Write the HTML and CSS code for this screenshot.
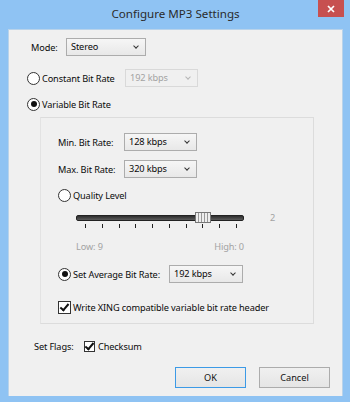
FILE: index.html
```html
<!DOCTYPE html>
<html lang="en">
<head>
  <meta charset="UTF-8">
  <title>Configure MP3 Settings</title>
  <link rel="stylesheet" href="styles.css">
</head>
<body>

  <div class="window">
    <div class="titlebar">
      <span class="title">Configure MP3 Settings</span>
      <span class="close-btn">
        <svg width="8" height="8" viewBox="0 0 8 8"><path d="M1 1 L7 7 M7 1 L1 7" stroke="#fff" stroke-width="1.7"/></svg>
      </span>
    </div>

    <div class="client">
      <div class="row mode-row">
        <span class="label mode-label">Mode:</span>
        <div class="combo mode-combo">Stereo<span class="arrow"></span></div>
      </div>

      <div class="row cbr-row">
        <span class="radio"></span>
        <span class="label cbr-label">Constant Bit Rate</span>
        <div class="combo disabled cbr-combo">192 kbps<span class="arrow"></span></div>
      </div>

      <div class="row vbr-row">
        <span class="radio checked"></span>
        <span class="label">Variable Bit Rate</span>
      </div>

      <!-- VBR options group -->
      <div class="group">
        <div class="row min-row">
          <span class="label rate-label">Min. Bit Rate:</span>
          <div class="combo rate-combo">128 kbps<span class="arrow"></span></div>
        </div>
        <div class="row max-row">
          <span class="label rate-label">Max. Bit Rate:</span>
          <div class="combo rate-combo">320 kbps<span class="arrow"></span></div>
        </div>
        <div class="row quality-row">
          <span class="radio"></span>
          <span class="label">Quality Level</span>
        </div>
        <div class="slider-row">
          <div class="slider">
            <div class="track"></div>
            <div class="thumb"></div>
            <div class="ticks">
              <span></span><span></span><span></span><span></span><span></span>
              <span></span><span></span><span></span><span></span><span></span>
            </div>
          </div>
          <span class="slider-value">2</span>
        </div>
        <div class="range-row">
          <span>Low: 9</span>
          <span>High: 0</span>
        </div>
        <div class="row avg-row">
          <span class="radio checked"></span>
          <span class="label avg-label">Set Average Bit Rate:</span>
          <div class="combo avg-combo">192 kbps<span class="arrow"></span></div>
        </div>
        <div class="row xing-row">
          <span class="checkbox checked"></span>
          <span class="label">Write XING compatible variable bit rate header</span>
        </div>
      </div>

      <div class="row flags-row">
        <span class="label flags-label">Set Flags:</span>
        <span class="checkbox small checked"></span>
        <span class="label">Checksum</span>
      </div>

      <div class="buttons">
        <button class="btn default">OK</button>
        <button class="btn">Cancel</button>
      </div>
    </div>
  </div>

</body>
</html>
```

FILE: styles.css
```css
body {
  margin: 0;
  font-family: "Noto Sans", "Open Sans", sans-serif;
  font-size: 9.2px;
  letter-spacing: -0.12px;
  color: #0a0a0a;
}

.window {
  width: 350px;
  height: 402px;
  background-color: #8fc3f3;
  box-sizing: border-box;
  padding: 0 7px 6px 8px;
  display: flex;
  flex-direction: column;
}

.titlebar {
  height: 29px;
  position: relative;
  display: flex;
  justify-content: center;
  align-items: center;
}

.title {
  font-size: 11.6px;
  letter-spacing: 0;
  color: #2b2b2b;
  margin-top: -3px;
}

.close-btn {
  position: absolute;
  right: -1px;
  top: 0;
  width: 26px;
  height: 17px;
  background-color: #c75050;
  display: flex;
  align-items: center;
  justify-content: center;
}

.client {
  flex: 1;
  background-color: #f0f0f0;
  border: 1px solid #b9d3ea;
  border-bottom: none;
  padding-top: 8px;
}

.row {
  display: flex;
  align-items: center;
  height: 18px;
}

.row > * {
  flex-shrink: 0;
}

.label {
  white-space: nowrap;
}

/* combo boxes */
.combo {
  position: relative;
  box-sizing: border-box;
  height: 18px;
  border: 1px solid #acacac;
  background: linear-gradient(#f6f6f6, #e8e8e8);
  padding-left: 4px;
  line-height: 16px;
}

.combo .arrow {
  position: absolute;
  right: 7px;
  top: 5px;
  width: 3px;
  height: 3px;
  border-right: 1.5px solid #333;
  border-bottom: 1.5px solid #333;
  transform: rotate(45deg);
}

.combo.disabled {
  background: #f0f0f0;
  border-color: #d9d9d9;
  color: #a3a3a3;
}

.combo.disabled .arrow {
  border-color: #b5b5b5;
}

.mode-row {
  padding-left: 22px;
}

.mode-label {
  width: 35px;
}

.mode-combo {
  width: 80px;
}

.radio {
  box-sizing: border-box;
  width: 13px;
  height: 13px;
  border: 1px solid #333;
  border-radius: 50%;
  background: #fff;
  margin-right: 2px;
  display: flex;
  align-items: center;
  justify-content: center;
}

.radio.checked::after {
  content: "";
  width: 6px;
  height: 6px;
  border-radius: 50%;
  background: #111;
}

.checkbox {
  box-sizing: border-box;
  width: 13px;
  height: 13px;
  border: 1px solid #333;
  background: #fff;
  margin-right: 2px;
  position: relative;
}

.checkbox.checked::after {
  content: "";
  position: absolute;
  left: 3px;
  top: 0;
  width: 3px;
  height: 7px;
  border-right: 2px solid #111;
  border-bottom: 2px solid #111;
  transform: rotate(40deg);
}

.checkbox.small {
  width: 11px;
  height: 11px;
  margin-right: 3px;
}

.checkbox.small::after {
  left: 2px;
  top: -1px;
}

.cbr-row {
  margin-top: 13px;
  padding-left: 18px;
}

.cbr-label {
  width: 83px;
}

.cbr-combo {
  width: 73px;
}

.vbr-row {
  margin-top: 8px;
  padding-left: 18px;
}

/* group panel */
.group {
  box-sizing: border-box;
  margin: 4px 0 0 31px;
  width: 274px;
  height: 207px;
  border: 1px solid #dcdcdc;
  border-left-color: #e3e3e3;
  padding: 15px 0 0 17px;
}

.rate-label {
  width: 66px;
}

.rate-combo {
  width: 73px;
}

.max-row {
  margin-top: 9px;
}

.quality-row {
  margin-top: 8px;
}

.slider-row {
  display: flex;
  align-items: flex-start;
  margin-top: 6px;
  height: 20px;
}

.slider {
  position: relative;
  width: 168px;
  height: 20px;
  margin-left: 18px;
}

.track {
  margin-top: 5px;
  height: 6px;
  border-radius: 2px;
  background: linear-gradient(#2e2e2e, #5a5a5a);
  border: 1px solid #222;
  box-sizing: border-box;
}

.thumb {
  position: absolute;
  left: 119px;
  top: 2px;
  width: 16px;
  height: 11px;
  box-sizing: border-box;
  border: 1px solid #777;
  background: repeating-linear-gradient(90deg, #eee 0 2px, #999 2px 3px);
}

.ticks {
  display: flex;
  justify-content: space-between;
  margin: 3px 7px 0 9px;
}

.ticks span {
  width: 1px;
  height: 4px;
  background: #222;
}

.slider-value {
  margin-left: 26px;
  color: #a3a3a3;
  line-height: 16px;
}

.range-row {
  display: flex;
  justify-content: space-between;
  width: 168px;
  margin: 10px 0 0 18px;
  height: 14px;
  line-height: 14px;
  color: #a3a3a3;
}

.avg-row {
  margin-top: 11px;
}

.avg-label {
  width: 96px;
}

.avg-combo {
  width: 74px;
}

.xing-row {
  margin-top: 15px;
}

.flags-row {
  margin-top: 13px;
  padding-left: 25px;
}

.flags-label {
  width: 50px;
}

.buttons {
  display: flex;
  justify-content: flex-end;
  gap: 13px;
  margin-top: 12px;
  padding-right: 12px;
}

.btn {
  width: 71px;
  height: 21px;
  font-family: inherit;
  font-size: 9.2px;
  color: #111;
  border: 1px solid #acacac;
  background: linear-gradient(#f0f0f0, #e5e5e5);
  padding: 0;
}

.btn.default {
  border-color: #3c9ae6;
}
```
